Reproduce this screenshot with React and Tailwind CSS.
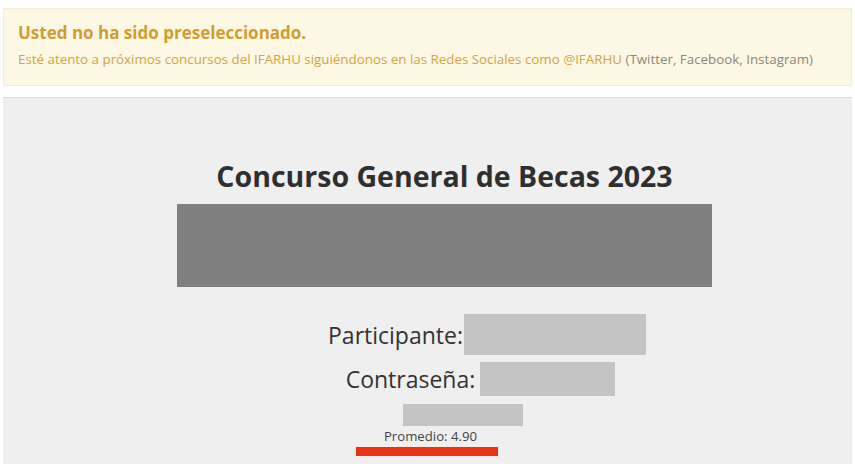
export default function App() {
  return (
    <div className="w-[855px] h-[464px] overflow-hidden bg-white font-['Open_Sans',sans-serif]">
      {/* Alert */}
      <div className="mx-[3px] mt-[8px] h-[78px] border border-[#f7ecd2] bg-[#fcf8e4] px-[14px] pt-[13px]">
        <p className="text-[17px] font-bold leading-[22px] text-[#d09d33]">
          Usted no ha sido preseleccionado.
        </p>
        <p className="mt-[6px] text-[13.35px] leading-[18px] text-[#d4a445] whitespace-nowrap">
          Esté atento a próximos concursos del IFARHU siguiéndonos en las Redes Sociales como @IFARHU{' '}
          <span className="text-[#8d8878]">(Twitter, Facebook, Instagram)</span>
        </p>
      </div>

      {/* Panel */}
      <div className="mx-[3px] mt-[11px] h-[400px] border-t border-[#dcdcdc] bg-[#efefef] flex flex-col items-center pt-[59px] pl-[34px]">
        <h1 className="text-[28.5px] font-bold leading-[38px] text-[#2f2f2f]">
          Concurso General de Becas 2023
        </h1>
        <div className="mt-[9px] w-[535px] h-[83px] bg-[#7f7f7f]" />

        <div className="mt-[27px] flex items-center pl-[85px]">
          <span className="text-[23px] leading-[30px] text-[#333]">Participante:</span>
          <div className="ml-[1px] w-[182px] h-[41px] bg-[#c4c4c4]" />
        </div>
        <div className="mt-[7px] flex items-center pl-[72px]">
          <span className="text-[23px] leading-[30px] text-[#333]">Contraseña:</span>
          <div className="ml-[5px] w-[135px] h-[34px] bg-[#c4c4c4]" />
        </div>
        <div className="mt-[8px] ml-[36px] w-[120px] h-[22px] bg-[#c4c4c4]" />
        <p className="mt-[1px] text-[13.2px] leading-[18px] text-[#444] -ml-[28px]">Promedio: 4.90</p>
        <div className="mt-[2px] -ml-[36px] w-[142px] h-[9px] bg-[#ea3215]" />
      </div>
    </div>
  )
}
